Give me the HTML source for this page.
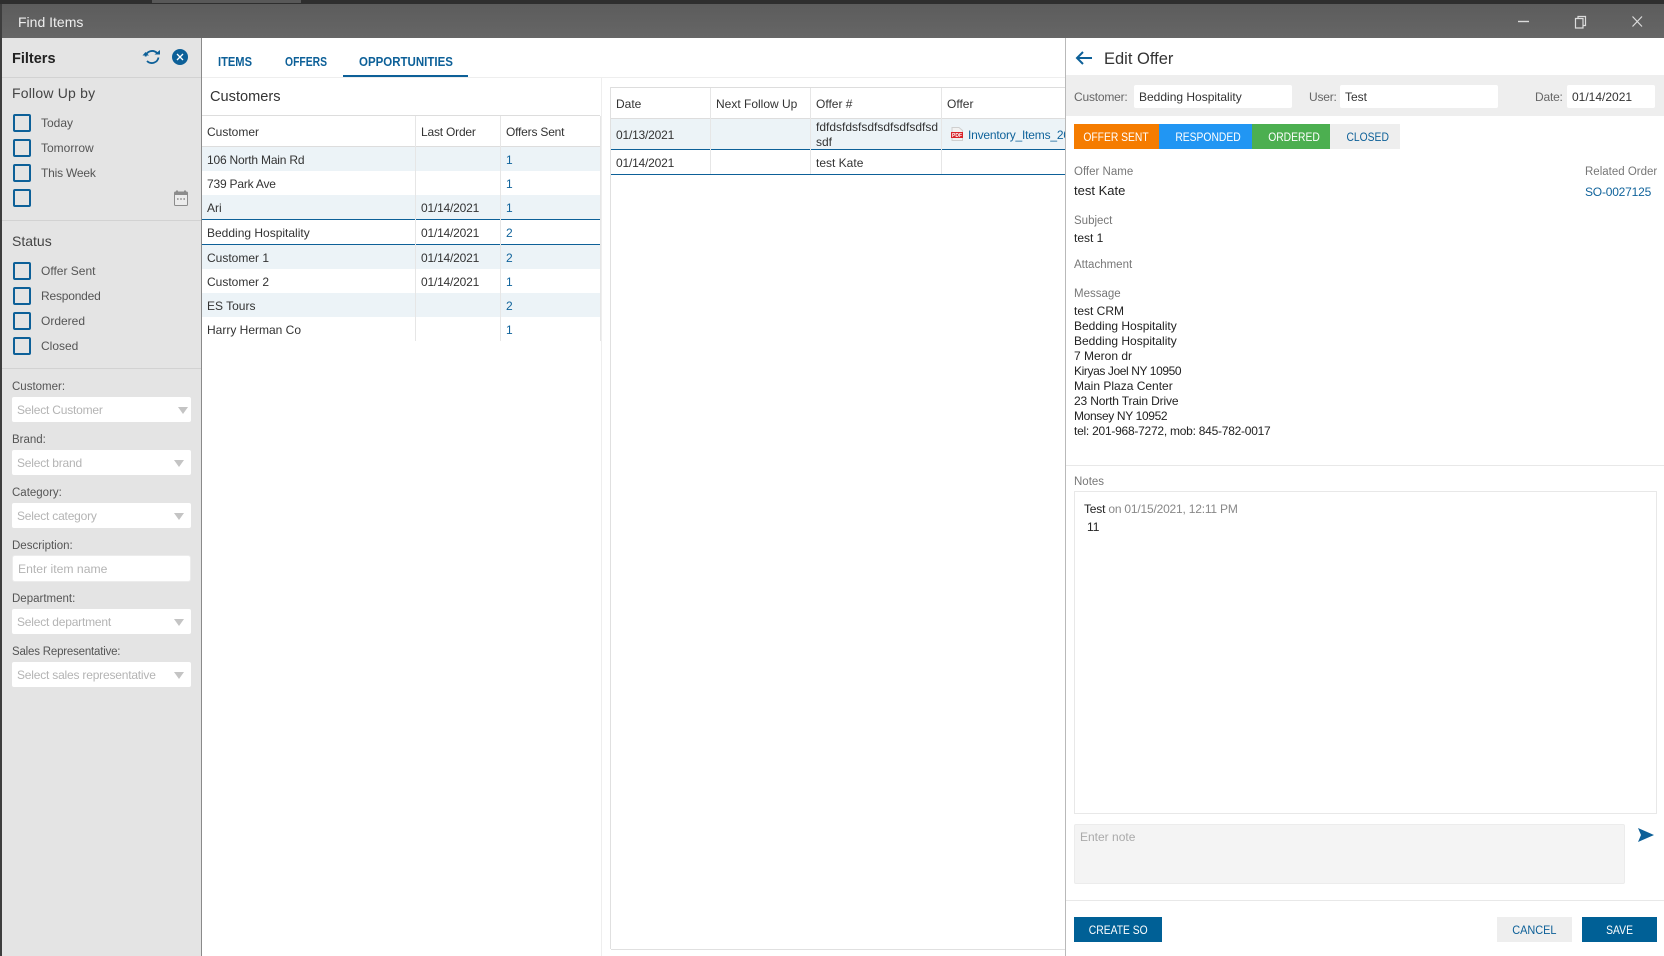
<!DOCTYPE html>
<html lang="en"><head><meta charset="utf-8"><title>Find Items</title>
<style>
html,body{margin:0;padding:0;width:1664px;height:956px;overflow:hidden;background:#fff;font-family:"Liberation Sans",sans-serif;color:#333;font-size:12px}
.a{position:absolute}
.t{position:absolute;white-space:nowrap;line-height:20px;height:20px}
.d{letter-spacing:-.2px}
.cb{position:absolute;left:13px;width:14px;height:14px;border:2px solid #0d6098;border-radius:2px}
.lb{position:absolute;left:41px;font-size:12px;color:#555;line-height:20px;white-space:nowrap}
.fl{position:absolute;left:12px;font-size:11.5px;color:#555;line-height:16px;white-space:nowrap}
.sel{position:absolute;left:12px;width:179px;height:25px;background:#fff;border-radius:2px;font-size:12px;letter-spacing:-.2px;color:#b4b4b4;line-height:27px;text-indent:5px;white-space:nowrap}
.sel:after{content:"";position:absolute;left:162px;top:10px;border-left:5px solid transparent;border-right:5px solid transparent;border-top:7px solid #c4c4c4}
.sel.c:after{left:166px}
.sel.n:after{display:none}
.r{position:absolute;left:202px;width:398px}
.tint{background:#ecf3f7}
.v{position:absolute;width:1px;background:#e6e6e6}
.h{position:absolute;height:1px;background:#ddd}
.link{color:#10639b}
.tab{position:absolute;white-space:nowrap;line-height:20px;font-size:12.5px;font-weight:bold;color:#0d6098;transform-origin:left center}
.sb{position:absolute;top:124px;height:25px;line-height:26px;text-align:center;color:#fff;font-size:12px}
.btn{position:absolute;top:917px;height:25px;line-height:26px;text-align:center;font-size:12px;color:#fff;background:#006096}
.s{display:inline-block;position:relative;transform:scaleX(.86)}
.g{color:#777;font-size:11.5px}
</style></head><body>

<!-- top strip and title bar -->
<div class="a" style="left:0;top:0;width:1664px;height:4px;background:#2e2e2e"></div>
<div class="a" style="left:152px;top:0;width:149px;height:3px;background:#585858"></div>
<div class="a" style="left:0;top:4px;width:1664px;height:34px;background:linear-gradient(#5c5c5c,#666)"></div>
<div class="a" style="left:0;top:4px;width:2px;height:952px;background:#3d3d3d"></div>
<div class="t" style="left:18px;top:12px;font-size:14px;color:#eee">Find Items</div>
<svg class="a" style="left:1510px;top:10px" width="150" height="24" fill="none" stroke="#dcdcdc">
<path d="M8 11.5H19" stroke-width="1.4"/>
<path d="M65.5 8.5h7.5v9.5h-7.5z M68 8.5V6.5h7.5v9h-2.5" stroke-width="1.2"/>
<path d="M122.5 6.5l9.5 10M132 6.5l-9.5 10" stroke-width="1.2"/>
</svg>

<!-- filters -->
<div class="a" style="left:2px;top:38px;width:199px;height:918px;background:#e4e4e4;border-right:1px solid #8a8a8a"></div>
<div class="t" style="left:12px;top:49px;font-size:14.5px;font-weight:bold;color:#222">Filters</div>
<svg class="a" style="left:142px;top:47px" width="20" height="20" fill="none" stroke="#0d6098" stroke-width="1.8">
<path d="M3.5 9.5A6.8 6.8 0 0 1 15 6"/><path d="M16.5 10.5A6.8 6.8 0 0 1 5 14"/>
<path d="M12.5 7.5h5.5V3z" fill="#0d6098" stroke="none"/><path d="M0.5 8.5h6.5L3.5 5z" fill="#0d6098" stroke="none"/>
</svg>
<svg class="a" style="left:172px;top:49px" width="16" height="16"><circle cx="8" cy="8" r="8" fill="#0d6098"/><path d="M5 5l6 6M11 5l-6 6" stroke="#fff" stroke-width="1.3"/></svg>
<div class="a" style="left:2px;top:77px;width:199px;height:1px;background:#d2d2d2"></div>
<div class="t" style="left:12px;top:83px;font-size:14px;letter-spacing:.2px;color:#444">Follow Up by</div>
<div class="cb" style="top:114px"></div><div class="lb" style="top:113px">Today</div>
<div class="cb" style="top:139px"></div><div class="lb" style="top:138px">Tomorrow</div>
<div class="cb" style="top:164px"></div><div class="lb" style="top:163px;letter-spacing:-.2px">This Week</div>
<div class="cb" style="top:189px"></div>
<svg class="a" style="left:174px;top:190px" width="14" height="16"><path d="M3 0.5v2M11 0.5v2" stroke="#8c8c8c" stroke-width="2"/><rect x="0.5" y="2" width="13" height="13.5" rx="1" fill="#ececec" stroke="#8c8c8c"/><rect x="0.5" y="2" width="13" height="3" fill="#8c8c8c"/><path d="M3 9h1.6M6.2 9h1.6M9.4 9H11" stroke="#8c8c8c" stroke-width="1.4"/></svg>
<div class="a" style="left:2px;top:220px;width:199px;height:1px;background:#d2d2d2"></div>
<div class="t" style="left:12px;top:231px;font-size:14px;color:#444">Status</div>
<div class="cb" style="top:262px"></div><div class="lb" style="top:261px">Offer Sent</div>
<div class="cb" style="top:287px"></div><div class="lb" style="top:286px;letter-spacing:-.2px">Responded</div>
<div class="cb" style="top:312px"></div><div class="lb" style="top:311px">Ordered</div>
<div class="cb" style="top:337px"></div><div class="lb" style="top:336px">Closed</div>
<div class="a" style="left:2px;top:368px;width:199px;height:1px;background:#d2d2d2"></div>
<div class="fl" style="top:379px">Customer:</div><div class="sel c" style="top:397px">Select Customer</div>
<div class="fl" style="top:432px">Brand:</div><div class="sel" style="top:450px">Select brand</div>
<div class="fl" style="top:485px">Category:</div><div class="sel" style="top:503px">Select category</div>
<div class="fl" style="top:538px">Description:</div>
<div class="sel n" style="top:556px;left:13px;width:177px;letter-spacing:0;font-size:12.2px;box-shadow:0 0 0 1px #ececec">Enter item name</div>
<div class="fl" style="top:591px">Department:</div><div class="sel" style="top:609px">Select department</div>
<div class="fl" style="top:644px;letter-spacing:-.2px">Sales Representative:</div><div class="sel" style="top:662px">Select sales representative</div>

<!-- tabs -->
<div class="tab" style="left:218px;top:52px;transform:scaleX(.89)">ITEMS</div>
<div class="tab" style="left:285px;top:52px;transform:scaleX(.83)">OFFERS</div>
<div class="tab" style="left:359px;top:52px;transform:scaleX(.92)">OPPORTUNITIES</div>
<div class="a" style="left:202px;top:77px;width:863px;height:1px;background:#eee"></div>
<div class="a" style="left:343px;top:75px;width:125px;height:2px;background:#0d6098"></div>
<div class="a" style="left:601px;top:78px;width:1px;height:878px;background:#eee"></div>

<!-- customers table -->
<div class="t" style="left:210px;top:87px;font-size:14.6px;color:#333">Customers</div>
<div class="h" style="left:202px;top:115px;width:398px;background:#ddd"></div>
<div class="h" style="left:202px;top:146px;width:398px;background:#ddd"></div>
<div class="r tint" style="top:147px;height:24px"></div>
<div class="r tint" style="top:195px;height:24px"></div>
<div class="r tint" style="top:245px;height:24px"></div>
<div class="r tint" style="top:293px;height:24px"></div>
<div class="h" style="left:202px;top:219px;width:398px;background:#0d6098"></div>
<div class="h" style="left:202px;top:244px;width:398px;background:#0d6098"></div>
<div class="v" style="left:415px;top:116px;height:225px"></div>
<div class="v" style="left:500px;top:116px;height:225px"></div>
<div class="v" style="left:600px;top:116px;height:225px"></div>
<div class="t" style="left:207px;top:122px">Customer</div><div class="t d" style="left:421px;top:122px">Last Order</div><div class="t d" style="left:506px;top:122px">Offers Sent</div>
<div class="t d" style="left:207px;top:150px">106 North Main Rd</div><div class="t link" style="left:506px;top:150px">1</div>
<div class="t d" style="left:207px;top:174px">739 Park Ave</div><div class="t link" style="left:506px;top:174px">1</div>
<div class="t" style="left:207px;top:198px">Ari</div><div class="t d" style="left:421px;top:198px">01/14/2021</div><div class="t link" style="left:506px;top:198px">1</div>
<div class="t" style="left:207px;top:223px">Bedding Hospitality</div><div class="t d" style="left:421px;top:223px">01/14/2021</div><div class="t link" style="left:506px;top:223px">2</div>
<div class="t" style="left:207px;top:248px">Customer 1</div><div class="t d" style="left:421px;top:248px">01/14/2021</div><div class="t link" style="left:506px;top:248px">2</div>
<div class="t" style="left:207px;top:272px">Customer 2</div><div class="t d" style="left:421px;top:272px">01/14/2021</div><div class="t link" style="left:506px;top:272px">1</div>
<div class="t" style="left:207px;top:296px">ES Tours</div><div class="t link" style="left:506px;top:296px">2</div>
<div class="t" style="left:207px;top:320px">Harry Herman Co</div><div class="t link" style="left:506px;top:320px">1</div>

<!-- offers table -->
<div class="a" style="left:610px;top:87px;width:1px;height:862px;background:#e0e0e0"></div>
<div class="h" style="left:611px;top:87px;width:454px"></div>
<div class="h" style="left:611px;top:118px;width:454px"></div>
<div class="a tint" style="left:611px;top:119px;width:454px;height:30px"></div>
<div class="h" style="left:611px;top:149px;width:454px;background:#0d6098"></div>
<div class="h" style="left:611px;top:174px;width:454px;background:#0d6098"></div>
<div class="h" style="left:611px;top:949px;width:454px;background:#e0e0e0"></div>
<div class="v" style="left:710px;top:88px;height:86px"></div>
<div class="v" style="left:810px;top:88px;height:86px"></div>
<div class="v" style="left:941px;top:88px;height:86px"></div>
<div class="t" style="left:616px;top:94px">Date</div><div class="t" style="left:716px;top:94px">Next Follow Up</div><div class="t" style="left:816px;top:94px">Offer #</div><div class="t" style="left:947px;top:94px">Offer</div>
<div class="t d" style="left:616px;top:125px">01/13/2021</div>
<div class="t" style="left:816px;top:117px;width:124px;overflow:hidden">fdfdsfdsfsdfsdfsdfsdfsd</div>
<div class="t" style="left:816px;top:132px">sdf</div>
<svg class="a" style="left:951px;top:127px" width="12" height="14"><path d="M1 .5h7l3.5 3V13.5H1z" fill="#f2f2f2" stroke="#cfcfcf"/><rect x="0" y="5" width="12" height="6" fill="#d8232a"/><text x="6" y="10" font-size="5" font-weight="bold" fill="#fff" text-anchor="middle" font-family="Liberation Sans">PDF</text></svg>
<div class="t link" style="left:968px;top:125px;width:97px;overflow:hidden;letter-spacing:-.2px">Inventory_Items_20</div>
<div class="t d" style="left:616px;top:153px">01/14/2021</div>
<div class="t" style="left:816px;top:153px">test Kate</div>

<!-- edit panel -->
<div class="a" style="left:1065px;top:38px;width:599px;height:918px;background:#fff;border-left:1px solid #b9b9b9;box-sizing:border-box"></div>
<svg class="a" style="left:1075px;top:50px" width="18" height="16" fill="none" stroke="#0d6098" stroke-width="2"><path d="M17 8H2M8 2L2 8l6 6"/></svg>
<div class="t" style="left:1104px;top:49px;font-size:16.5px;color:#333">Edit Offer</div>
<div class="a" style="left:1066px;top:75px;width:598px;height:41px;background:#eee"></div>
<div class="t d" style="left:1074px;top:87px;color:#666">Customer:</div>
<div class="t" style="left:1134px;top:85px;width:158px;height:23px;line-height:25px;background:#fff;border-radius:2px;text-indent:5px">Bedding Hospitality</div>
<div class="t d" style="left:1309px;top:87px;color:#666">User:</div>
<div class="t" style="left:1340px;top:85px;width:158px;height:23px;line-height:25px;background:#fff;border-radius:2px;text-indent:5px">Test</div>
<div class="t d" style="left:1535px;top:87px;color:#666">Date:</div>
<div class="t" style="left:1567px;top:85px;width:88px;height:23px;line-height:25px;background:#fff;border-radius:2px;text-indent:5px">01/14/2021</div>
<div class="sb" style="left:1074px;width:85px;background:#f57c00"><span class="s">OFFER SENT</span></div>
<div class="sb" style="left:1159px;width:93px;background:#2196f3"><span class="s" style="left:3px">RESPONDED</span></div>
<div class="sb" style="left:1252px;width:78px;background:#4caf50"><span class="s" style="left:3px">ORDERED</span></div>
<div class="sb" style="left:1330px;width:70px;background:#eee;color:#0d6098"><span class="s" style="left:3px">CLOSED</span></div>
<div class="t g" style="left:1074px;top:162px">Offer Name</div>
<div class="t" style="left:1074px;top:181px;font-size:13px;color:#222">test Kate</div>
<div class="t g" style="left:1585px;top:162px">Related Order</div>
<div class="t link d" style="left:1585px;top:182px">SO-0027125</div>
<div class="t g" style="left:1074px;top:211px">Subject</div>
<div class="t" style="left:1074px;top:228px;color:#222">test 1</div>
<div class="t g" style="left:1074px;top:255px">Attachment</div>
<div class="t g" style="left:1074px;top:284px">Message</div>
<div class="a" style="left:1074px;top:304px;line-height:15px;color:#222;white-space:nowrap">test CRM<br>Bedding Hospitality<br>Bedding Hospitality<br>7 Meron dr<br><span style="letter-spacing:-.4px">Kiryas Joel NY 10950</span><br>Main Plaza Center<br><span style="letter-spacing:-.15px">23 North Train Drive</span><br><span style="letter-spacing:-.35px">Monsey NY 10952</span><br><span style="letter-spacing:-.25px">tel: 201-968-7272, mob: 845-782-0017</span></div>
<div class="a" style="left:1066px;top:465px;width:598px;height:1px;background:#e8e8e8"></div>
<div class="t g" style="left:1074px;top:472px">Notes</div>
<div class="a" style="left:1074px;top:491px;width:581px;height:321px;border:1px solid #e8e8e8"></div>
<div class="t d" style="left:1084px;top:499px;color:#888"><span style="color:#222">Test</span> on 01/15/2021, 12:11 PM</div>
<div class="t" style="left:1087px;top:517px;color:#222">11</div>
<div class="a" style="left:1074px;top:824px;width:549px;height:58px;background:#f4f4f4;border:1px solid #ececec;border-radius:2px"></div>
<div class="t" style="left:1080px;top:827px;color:#aaa">Enter note</div>
<svg class="a" style="left:1637px;top:828px" width="18" height="15"><path d="M1 0L17 7 1 14 4 7z" fill="#0d6098"/></svg>
<div class="a" style="left:1066px;top:900px;width:598px;height:1px;background:#e8e8e8"></div>
<div class="btn" style="left:1074px;width:88px"><span class="s">CREATE SO</span></div>
<div class="btn" style="left:1497px;width:75px;background:#eee;color:#0d6098"><span class="s" style="transform:scaleX(.91)">CANCEL</span></div>
<div class="btn" style="left:1582px;width:75px"><span class="s">SAVE</span></div>
</body></html>
